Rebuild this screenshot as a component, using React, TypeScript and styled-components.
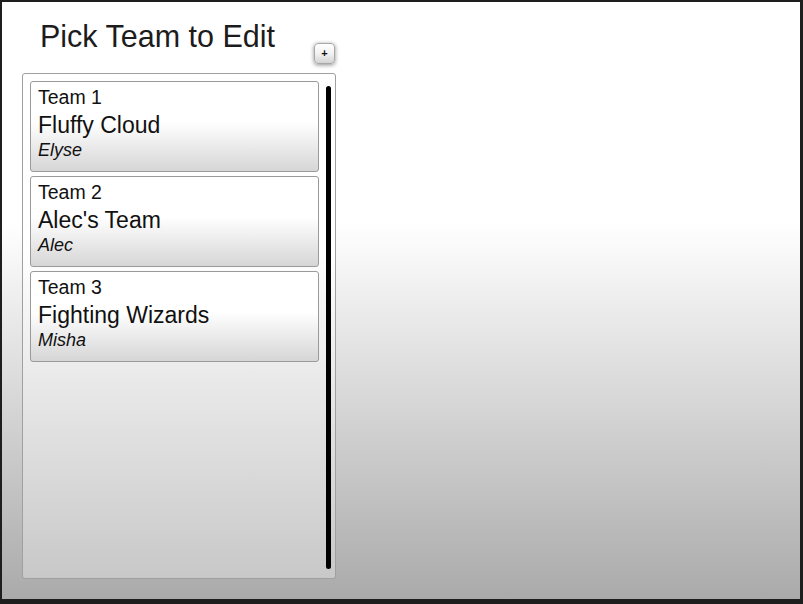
import styled, { createGlobalStyle } from "styled-components";

const GlobalStyle = createGlobalStyle`
  html, body {
    margin: 0;
    padding: 0;
    background: #1e1e1e;
  }
  body {
    font-family: "Liberation Sans", Arial, sans-serif;
  }
`;

type Team = { id: number; name: string; owner: string };

const teams: Team[] = [
  { id: 1, name: "Fluffy Cloud", owner: "Elyse" },
  { id: 2, name: "Alec's Team", owner: "Alec" },
  { id: 3, name: "Fighting Wizards", owner: "Misha" },
];

const Frame = styled.div`
  width: 803px;
  height: 604px;
  box-sizing: border-box;
  padding: 2px 3px 5px 2px;
  background: #1e1e1e;
`;

const Screen = styled.div`
  height: 100%;
  box-sizing: border-box;
  padding: 17px 0 0 20px;
  background: linear-gradient(to bottom, #fff 0%, #fff 37%, #aaa 100%);
`;

const Header = styled.div`
  width: 314px;
  display: flex;
  justify-content: space-between;
  align-items: flex-start;
`;

const Title = styled.h1`
  margin: 0 0 0 18px;
  font-size: 30.5px;
  line-height: 34px;
  font-weight: normal;
  color: #1c1c1c;
`;

const AddButton = styled.button`
  width: 21px;
  height: 21px;
  margin: 24px 1px 0 0;
  padding: 0;
  box-sizing: border-box;
  border: 1px solid #a8a8a8;
  border-radius: 4px;
  background: linear-gradient(to bottom, #fff 0%, #f2f2f2 50%, #d4d4d4 100%);
  box-shadow: 0 1px 4px rgba(0, 0, 0, 0.45);
  font-family: "Liberation Sans", Arial, sans-serif;
  font-size: 11px;
  font-weight: bold;
  line-height: 17px;
  color: #111;
  cursor: pointer;
`;

const Panel = styled.div`
  width: 314px;
  height: 506px;
  margin-top: 9px;
  box-sizing: border-box;
  padding: 7px 4px 0 7px;
  display: flex;
  gap: 7px;
  border: 1px solid #a0a0a0;
  border-radius: 3px;
  background: linear-gradient(to bottom, #fff 0%, #fff 35%, #c8c8c8 100%);
`;

const List = styled.div`
  width: 289px;
  flex-shrink: 0;
  display: flex;
  flex-direction: column;
  gap: 4px;
`;

const ScrollBar = styled.div`
  width: 5px;
  flex-shrink: 0;
  height: 483px;
  margin-top: 5px;
  border-radius: 3px;
  background: #000;
`;

const Card = styled.div`
  height: 91px;
  box-sizing: border-box;
  padding: 4px 7px 0 7px;
  border: 1px solid #9a9a9a;
  border-radius: 3px;
  background: linear-gradient(to bottom, #fff 0%, #fff 45%, #d6d6d6 100%);
  color: #111;
  cursor: pointer;
`;

const TeamNumber = styled.div`
  font-size: 19.5px;
  line-height: 22px;
`;

const TeamName = styled.div`
  margin-top: 4px;
  font-size: 23px;
  line-height: 26px;
`;

const Owner = styled.div`
  margin-top: 2px;
  font-size: 18px;
  line-height: 20px;
  font-style: italic;
`;

export default function App() {
  return (
    <Frame>
      <GlobalStyle />
      <Screen>
        <Header>
          <Title>Pick Team to Edit</Title>
          <AddButton>+</AddButton>
        </Header>
        <Panel>
          <List>
            {teams.map((t) => (
              <Card key={t.id}>
                <TeamNumber>Team {t.id}</TeamNumber>
                <TeamName>{t.name}</TeamName>
                <Owner>{t.owner}</Owner>
              </Card>
            ))}
          </List>
          <ScrollBar />
        </Panel>
      </Screen>
    </Frame>
  );
}
